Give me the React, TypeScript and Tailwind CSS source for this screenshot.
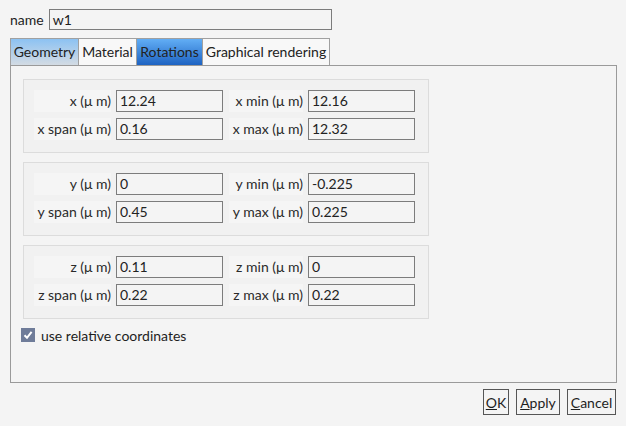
import React from "react";

type Field = { label: string; value: string };

interface GroupProps {
  rows: [Field, Field][];
}

const font = { fontFamily: "Lato, 'Noto Sans', sans-serif" };

const Input: React.FC<{ value: string }> = ({ value }) => (
  <div className="h-[22px] w-[107px] border border-[#7c7c7c] bg-[#f4f4f4] pl-[3px] text-[14px] leading-[20px] text-[#222]">
    {value}
  </div>
);

const Label: React.FC<{ text: string; width: string }> = ({ text, width }) => (
  <div className={`${width} h-[22px] whitespace-nowrap bg-[#f5f5f5] text-right text-[14px] leading-[22px] text-[#2a2a2a]`}>
    {text}
  </div>
);

const CoordGroup: React.FC<GroupProps> = ({ rows }) => (
  <div className="flex w-[406px] flex-col gap-[6px] border border-[#dcdcdc] bg-[#f1f1f1] pb-[12px] pl-[10px] pt-[10px]">
    {rows.map(([a, b], i) => (
      <div key={i} className="flex items-center">
        <Label text={a.label} width="w-[77px]" />
        <div className="ml-[5px]">
          <Input value={a.value} />
        </div>
        <div className="ml-[6px]">
          <Label text={b.label} width="w-[74px]" />
        </div>
        <div className="ml-[5px]">
          <Input value={b.value} />
        </div>
      </div>
    ))}
  </div>
);

const tabs = [
  { name: "Geometry", cls: "bg-gradient-to-b from-[#8cc2f2] to-[#d3dbe3] w-[69px]" },
  { name: "Material", cls: "bg-[#f8f8f8] w-[59px]" },
  { name: "Rotations", cls: "bg-gradient-to-b from-[#62aef5] to-[#1e63c2] w-[67px]" },
  { name: "Graphical rendering", cls: "bg-[#f8f8f8] w-[128px]" },
];

const groups: [Field, Field][][] = [
  [
    [{ label: "x (μ m)", value: "12.24" }, { label: "x min (μ m)", value: "12.16" }],
    [{ label: "x span (μ m)", value: "0.16" }, { label: "x max (μ m)", value: "12.32" }],
  ],
  [
    [{ label: "y (μ m)", value: "0" }, { label: "y min (μ m)", value: "-0.225" }],
    [{ label: "y span (μ m)", value: "0.45" }, { label: "y max (μ m)", value: "0.225" }],
  ],
  [
    [{ label: "z (μ m)", value: "0.11" }, { label: "z min (μ m)", value: "0" }],
    [{ label: "z span (μ m)", value: "0.22" }, { label: "z max (μ m)", value: "0.22" }],
  ],
];

export default function App() {
  return (
    <div className="flex h-[426px] w-[626px] flex-col bg-[#f4f4f4] px-[10px] pt-[9px] text-[#1e1e1e]" style={font}>
      {/* name row */}
      <div className="flex items-center">
        <span className="text-[14px]">name</span>
        <div className="ml-[5px] h-[21px] w-[283px] border border-[#7c7c7c] bg-[#f4f4f4] pl-[3px] text-[14px] leading-[19px]">
          w1
        </div>
      </div>

      {/* tabs */}
      <div className="mt-[8px] flex">
        {tabs.map((t) => (
          <div
            key={t.name}
            className={`${t.cls} -mr-px h-[27px] whitespace-nowrap border border-b-0 border-[#a0a0a0] text-center text-[14px] leading-[26px] text-[#222]`}
          >
            {t.name}
          </div>
        ))}
      </div>

      {/* tab pane */}
      <div className="flex h-[318px] w-[607px] flex-col gap-[9px] border border-[#9a9a9a] bg-[#f4f4f4] pl-[12px] pt-[13px]">
        {groups.map((g, i) => (
          <CoordGroup key={i} rows={g} />
        ))}
        <div className="-ml-[2px] -mt-[3px] flex h-[20px] items-center gap-[6px]">
          <div className="flex h-[14px] w-[14px] items-center justify-center bg-[#6f7c99]">
            <svg width="10" height="10" viewBox="0 0 10 10">
              <path d="M1.5 5.2 L4 7.8 L8.6 1.8" stroke="white" strokeWidth="2" fill="none" />
            </svg>
          </div>
          <span className="text-[14px]">use relative coordinates</span>
        </div>
      </div>

      {/* buttons */}
      <div className="mt-[6px] flex justify-end gap-[7px]">
        <button className="h-[26px] w-[26px] border border-[#555] bg-[#f4f4f4] text-[14px]">
          <u>O</u>K
        </button>
        <button className="h-[26px] w-[44px] border border-[#555] bg-[#f4f4f4] text-[14px]">
          <u>A</u>pply
        </button>
        <button className="h-[26px] w-[49px] border border-[#555] bg-[#f4f4f4] text-[14px]">
          <u>C</u>ancel
        </button>
      </div>
    </div>
  );
}
